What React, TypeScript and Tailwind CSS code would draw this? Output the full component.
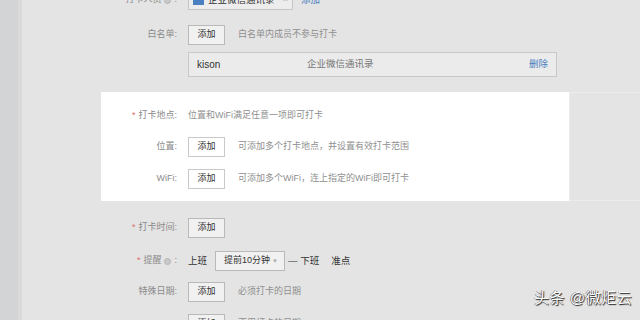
import React from "react";

const font = { fontFamily: '"Liberation Sans", "Noto Sans CJK SC", sans-serif' };

function Btn({ white }: { white?: boolean }) {
  return (
    <div
      className={`w-[37px] h-[20px] flex items-center justify-center border text-[9px] text-[#333] ${
        white ? "bg-white border-[#c9c9c9]" : "bg-[#f1f1f1] border-[#b9b9b9]"
      }`}
    >
      添加
    </div>
  );
}

function Info() {
  return <span className="inline-block w-[7px] h-[7px] rounded-full bg-[#c9c9c9] border border-[#b5b5b5] mx-[3px]" />;
}

function Label({ w, children, star }: { w: string; children: React.ReactNode; star?: boolean }) {
  return (
    <div className={`${w} shrink-0 flex justify-end items-center pr-[11px] text-[9px] text-[#8a8a8a]`}>
      {star && <span className="text-[#e06a6a] mr-[3px]">*</span>}
      {children}
    </div>
  );
}

export default function App() {
  return (
    <div className="relative w-[640px] h-[320px] overflow-hidden flex bg-[#e4e4e4]" style={font}>
      <div className="w-[18px] shrink-0 bg-[#d3d4d6]" />
      <div className="w-[4px] shrink-0 bg-[#dadadb]" />
      <div className="flex-1 flex flex-col -mt-[10px]">
        {/* 打卡人员 */}
        <div className="flex h-[20px] items-center">
          <Label w="w-[166px]">
            打卡人员<Info />:
          </Label>
          <div className="w-[105px] h-[20px] flex items-center border border-[#c6c6c6] bg-[#ededed] px-[4px]">
            <span className="w-[11px] h-[10px] bg-[#4a7fc1] mr-[4px]" />
            <span className="text-[9.5px] text-[#333]">企业微信通讯录</span>
            <span className="ml-auto text-[9px] text-[#999]">×</span>
          </div>
          <span className="ml-[8px] text-[9.5px] text-[#4a7fc1]">添加</span>
        </div>
        {/* 白名单 */}
        <div className="flex h-[20px] items-center mt-[15px]">
          <Label w="w-[166px]">白名单:</Label>
          <Btn />
          <span className="ml-[13px] text-[9px] text-[#8f8f8f]">白名单内成员不参与打卡</span>
        </div>
        <div className="flex h-[25px] mt-[7px]">
          <div className="w-[166px] shrink-0" />
          <div className="w-[369px] h-[25px] flex items-center border border-[#c8c8c8] bg-[#ebebeb] pl-[8px] pr-[8px]">
            <span className="text-[10px] text-[#333] w-[110px]">kison</span>
            <span className="text-[9.5px] text-[#777]">企业微信通讯录</span>
            <span className="ml-auto text-[9.5px] text-[#4a7fc1]">删除</span>
          </div>
        </div>
        {/* white box */}
        <div className="flex mt-[15px] h-[109px]">
          <div className="w-[79px] shrink-0" />
          <div className="w-[468px] h-[109px] bg-white flex flex-col pt-[14px]">
            <div className="flex h-[20px] items-center">
              <Label w="w-[87px]" star>
                打卡地点:
              </Label>
              <span className="text-[9px] text-[#8f8f8f]">位置和WiFi满足任意一项即可打卡</span>
            </div>
            <div className="flex h-[20px] items-center mt-[11px]">
              <Label w="w-[87px]">位置:</Label>
              <Btn white />
              <span className="ml-[13px] text-[9px] text-[#8f8f8f]">可添加多个打卡地点，并设置有效打卡范围</span>
            </div>
            <div className="flex h-[20px] items-center mt-[12px]">
              <Label w="w-[87px]">WiFi:</Label>
              <Btn white />
              <span className="ml-[13px] text-[9px] text-[#8f8f8f]">可添加多个WiFi，连上指定的WiFi即可打卡</span>
            </div>
          </div>
          <div className="flex-1 h-[109px] border-t border-l border-b border-[#ececec] mt-0" />
        </div>
        {/* 打卡时间 */}
        <div className="flex h-[20px] items-center mt-[17px]">
          <Label w="w-[166px]" star>
            打卡时间:
          </Label>
          <Btn />
        </div>
        {/* 提醒 */}
        <div className="flex h-[20px] items-center mt-[13px]">
          <Label w="w-[166px]" star>
            提醒<Info />:
          </Label>
          <span className="text-[9.5px] text-[#333]">上班</span>
          <div className="ml-[8px] w-[70px] h-[20px] flex items-center border border-[#b9b9b9] bg-[#f1f1f1] pl-[8px] pr-[6px]">
            <span className="text-[9px] text-[#333]">提前10分钟</span>
            <span className="ml-auto text-[6px] text-[#aaa]">▼</span>
          </div>
          <span className="ml-[3px] text-[9.5px] text-[#333]">— 下班</span>
          <span className="ml-[12px] text-[9.5px] text-[#333]">准点</span>
        </div>
        {/* 特殊日期 */}
        <div className="flex h-[20px] items-center mt-[11px]">
          <Label w="w-[166px]">特殊日期:</Label>
          <Btn />
          <span className="ml-[13px] text-[9px] text-[#8f8f8f]">必须打卡的日期</span>
        </div>
        <div className="flex h-[20px] items-center mt-[12px]">
          <Label w="w-[166px]"> </Label>
          <Btn />
          <span className="ml-[13px] text-[9px] text-[#8f8f8f]">不用打卡的日期</span>
        </div>
      </div>
      <div
        className="absolute right-[8px] bottom-[11px] text-[15px] text-white tracking-[0.5px]"
        style={{ textShadow: "1px 1px 1px #222, -0.5px -0.5px 0.5px #444" }}
      >
        头条 @微炬云
      </div>
    </div>
  );
}
